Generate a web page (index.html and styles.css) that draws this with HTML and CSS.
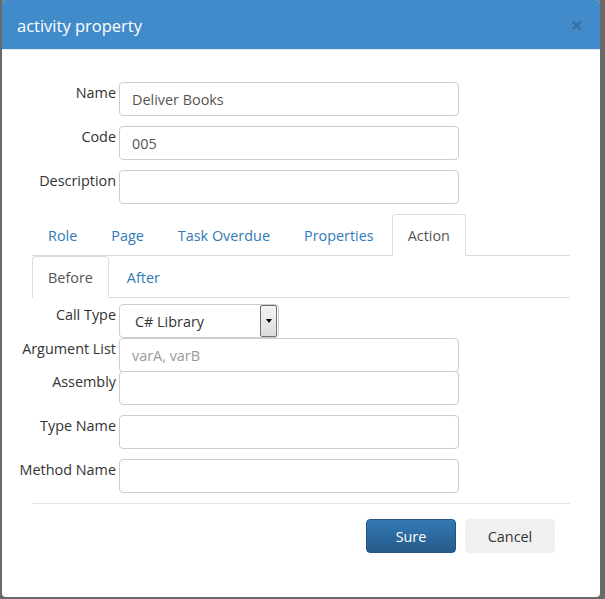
FILE: index.html
```html
<!DOCTYPE html>
<html>
<head>
<meta charset="utf-8">
<link rel="stylesheet" href="styles.css">
</head>
<body>
<div class="backdrop">
  <div class="modal">
    <div class="modal-header">
      <span class="title">activity property</span>
      <span class="close">&times;</span>
    </div>
    <div class="modal-body">
      <div class="row"><label>Name</label><div class="input">Deliver Books</div></div>
      <div class="row gap"><label>Code</label><div class="input">005</div></div>
      <div class="row gap"><label>Description</label><div class="input"></div></div>

      <ul class="tabs main-tabs">
        <li class="t-role">Role</li>
        <li>Page</li>
        <li>Task Overdue</li>
        <li>Properties</li>
        <li class="active">Action</li>
      </ul>
      <ul class="tabs sub-tabs">
        <li class="active">Before</li>
        <li>After</li>
      </ul>

      <div class="row first"><label>Call Type</label>
        <div class="select"><span class="sel-text">C# Library</span><span class="sel-btn"><span class="arrow"></span></span></div>
      </div>
      <div class="row tight"><label>Argument List</label><div class="input placeholder">varA, varB</div></div>
      <div class="row tight2"><label>Assembly</label><div class="input"></div></div>
      <div class="row gap"><label>Type Name</label><div class="input"></div></div>
      <div class="row gap"><label>Method Name</label><div class="input"></div></div>

      <div class="footer">
        <button class="btn primary">Sure</button>
        <button class="btn default">Cancel</button>
      </div>
    </div>
  </div>
</div>
</body>
</html>
```
FILE: styles.css
```css
html, body {
  margin: 0;
  padding: 0;
  background: #6a6a6a;
  font-family: "Open Sans", "Noto Sans", sans-serif;
  font-size: 14.4px;
  color: #333;
}
.backdrop {
  width: 605px;
  height: 599px;
  display: flex;
  padding-left: 2px;
  box-sizing: border-box;
}
.modal {
  width: 598px;
  height: 597px;
  background: #fff;
  border-radius: 4px;
  overflow: hidden;
  display: flex;
  flex-direction: column;
}
.modal-header {
  height: 50px;
  background: #428bca;
  border-bottom: 1px solid #e5e5e5;
  box-sizing: border-box;
  display: flex;
  align-items: center;
  justify-content: space-between;
  padding: 0 15px 0 15px;
}
.title {
  color: #fff;
  font-size: 16.5px;
  margin-top: 1px;
}
.close {
  color: #3b6f9c;
  font-size: 22px;
  font-weight: bold;
  line-height: 1;
  margin-top: -2px;
  margin-right: 2px;
}
.modal-body {
  padding: 32px 15px 0 15px;
  display: flex;
  flex-direction: column;
}
.row {
  display: flex;
  align-items: flex-start;
}
.row label {
  width: 99px;
  margin-right: 3px;
  text-align: right;
  line-height: 20px;
  padding-top: 1px;
  flex: none;
  white-space: nowrap;
}
.row.gap { margin-top: 10px; }
.row.first { margin-top: 6px; }
.row.tight { margin-top: 0; }
.row.tight2 { margin-top: -1px; }
.input {
  width: 340px;
  height: 34px;
  box-sizing: border-box;
  border: 1px solid #ccc;
  border-radius: 4px;
  padding: 0 12px;
  line-height: 34px;
  color: #555;
}
.input.placeholder { color: #999; }
.select {
  width: 160px;
  height: 34px;
  box-sizing: border-box;
  border: 1px solid #ccc;
  border-radius: 4px;
  display: flex;
  align-items: stretch;
  justify-content: space-between;
  color: #333;
}
.sel-text {
  line-height: 33px;
  padding-left: 15px;
}
.sel-btn {
  width: 15px;
  margin: 0 1px 0 0;
  border: 1px solid #707070;
  border-radius: 2px;
  background: linear-gradient(#f4f4f4, #dcdcdc);
  display: flex;
  align-items: center;
  justify-content: center;
}
.arrow {
  width: 0;
  height: 0;
  border-left: 3px solid transparent;
  border-right: 3px solid transparent;
  border-top: 4px solid #000;
}
.tabs {
  list-style: none;
  margin: 0 0 0 15px;
  padding: 0;
  width: 538px;
  display: flex;
  border-bottom: 1px solid #ddd;
}
.main-tabs { margin-top: 10px; }
.tabs li {
  padding: 11px 15px 9px 15px;
  line-height: 20px;
  margin-right: 2px;
  margin-bottom: -1px;
  color: #3279b7;
  border: 1px solid transparent;
  border-radius: 4px 4px 0 0;
}
.tabs li.active {
  color: #555;
  border-color: #ddd #ddd transparent #ddd;
  background: #fff;
}
.footer {
  margin: 10px 0 0 15px;
  width: 538px;
  border-top: 1px solid #e5e5e5;
  padding: 15px 15px 0 0;
  box-sizing: border-box;
  display: flex;
  justify-content: flex-end;
  gap: 9px;
}
.btn {
  font-family: inherit;
  font-size: 14.4px;
  width: 90px;
  height: 34px;
  border-radius: 4px;
  border: 1px solid transparent;
  padding: 0;
}
.btn.primary {
  color: #fff;
  background: linear-gradient(#337ab7, #265a88);
  border-color: #245580;
}
.btn.default {
  color: #333;
  background: #f0f0f0;
  border-color: #f0f0f0;
}
```
